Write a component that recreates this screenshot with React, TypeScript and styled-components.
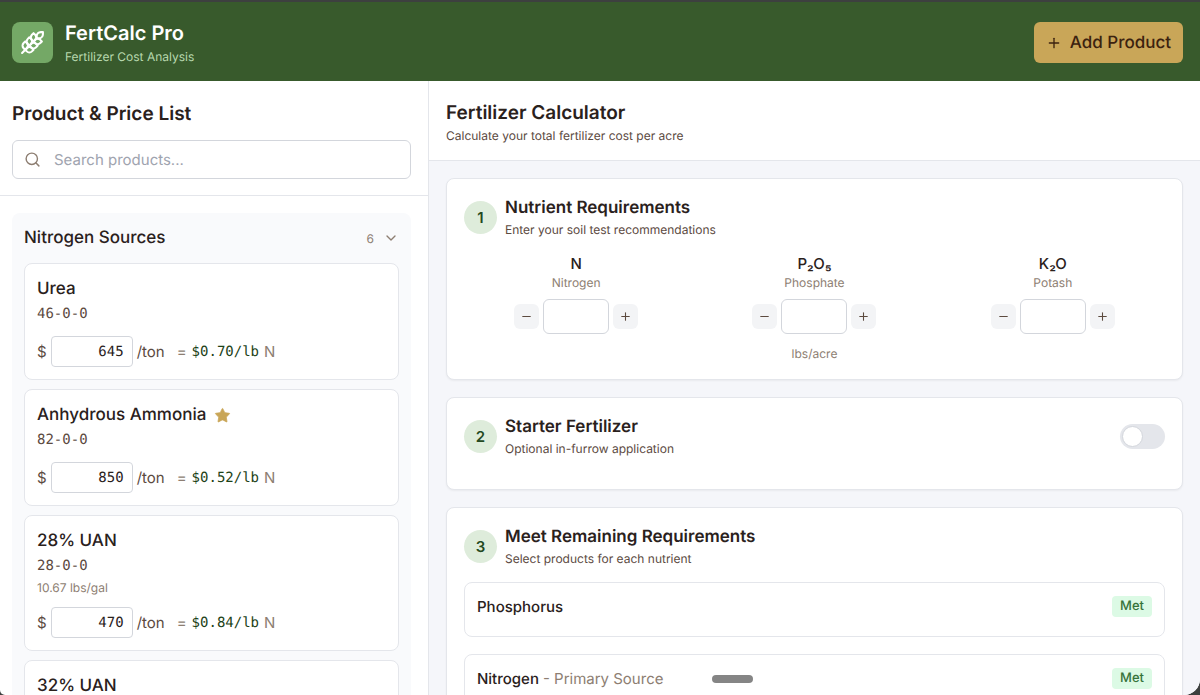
import React, { useState } from "react";
import styled, { createGlobalStyle } from "styled-components";
import { ChevronDown, Minus, Plus, Search, Star, Wheat } from "lucide-react";

const GlobalStyle = createGlobalStyle`
  *, *::before, *::after { box-sizing: border-box; }
  body {
    margin: 0;
    background: #3d403f;
    color: #2a211c;
    font-family: Inter, "Liberation Sans", sans-serif;
    text-rendering: geometricPrecision;
  }
  h1, h2, h3, h4, p { margin: 0; }
  button, input { font: inherit; color: inherit; text-rendering: inherit; }
`;

const MONO = `"DejaVu Sans Mono", "Liberation Mono", monospace`;

const Window = styled.div`
  display: flex;
  flex-direction: column;
  height: 100vh;
  border-top: 2px solid #3d403f;
  border-radius: 0 0 16px 5px;
  overflow: hidden;
  background: #ffffff;
`;

const TopBar = styled.header`
  display: flex;
  align-items: center;
  gap: 12px;
  padding: 17px 17px 15px 12px;
  background: #385a2c;
  color: #ffffff;
`;

const Logo = styled.div`
  display: grid;
  place-items: center;
  width: 41px;
  height: 41px;
  border-radius: 8px;
  background: #74a866;
`;

const Brand = styled.div`
  flex: 1;
`;

const BrandName = styled.h1`
  font-size: 20px;
  line-height: 29px;
  font-weight: 600;
`;

const Tagline = styled.p`
  font-size: 12px;
  line-height: 18px;
  color: #b7d8ae;
`;

const AddButton = styled.button`
  display: flex;
  align-items: center;
  gap: 8px;
  height: 41px;
  padding: 0 12px;
  border: 0;
  border-radius: 6px;
  background: #c9a658;
  color: #3b220f;
  font-size: 17px;
  font-weight: 500;
`;

const Columns = styled.div`
  display: flex;
  flex: 1;
  min-height: 0;
`;

const Sidebar = styled.aside`
  display: flex;
  flex-direction: column;
  flex: 0 0 429px;
  border-right: 1px solid #e4e6eb;
`;

const SidebarHead = styled.div`
  padding: 16px 17px 16px 12px;
  border-bottom: 1px solid #e4e6eb;
`;

const PanelTitle = styled.h2<{ $tall?: boolean }>`
  font-size: 19px;
  line-height: ${(p) => (p.$tall ? "33px" : "24px")};
  font-weight: 600;
`;

const SearchBox = styled.label`
  display: flex;
  align-items: center;
  gap: 13px;
  height: 39px;
  margin-top: 10px;
  padding: 0 11px;
  border: 1px solid #d3d6dc;
  border-radius: 6px;
  color: #8d7e72;
`;

const SearchInput = styled.input`
  flex: 1;
  min-width: 0;
  padding: 0;
  border: 0;
  outline: 0;
  background: transparent;
  color: #2a211c;
  font-size: 15px;
  &::placeholder { color: #9fa4af; opacity: 1; }
`;

const Scroll = styled.div`
  flex: 1;
  min-height: 0;
  overflow-y: auto;
  scrollbar-width: none;
`;

const ProductScroll = styled(Scroll)`
  padding: 17px 17px 17px 12px;
`;

const Group = styled.section`
  padding: 0 12px 12px;
  border-radius: 8px;
  background: #f9fafc;
`;

const GroupToggle = styled.button`
  display: flex;
  align-items: center;
  width: 100%;
  height: 50px;
  padding: 0;
  border: 0;
  background: transparent;
  text-align: left;
`;

const GroupName = styled.span`
  flex: 1;
  font-size: 17px;
  font-weight: 500;
`;

const GroupCount = styled.span`
  display: flex;
  align-items: center;
  gap: 9px;
  font-size: 12px;
  color: #8d7e72;
`;

const ProductList = styled.div`
  display: flex;
  flex-direction: column;
  gap: 9px;
`;

const ProductCard = styled.article`
  padding: 12px;
  border: 1px solid #e4e6eb;
  border-radius: 8px;
  background: #ffffff;
`;

const ProductName = styled.h3`
  display: flex;
  align-items: center;
  gap: 8px;
  font-size: 17px;
  line-height: 26px;
  font-weight: 500;
`;

const Analysis = styled.p`
  font-family: ${MONO};
  font-size: 14px;
  line-height: 25px;
  color: #5c4a3f;
`;

const Density = styled.p`
  margin-bottom: 11px;
  font-size: 12px;
  line-height: 17px;
  color: #8d7e72;
`;

const PriceRow = styled.div`
  display: flex;
  align-items: center;
  gap: 4px;
  font-size: 15px;
  color: #5c4a3f;
  ${Analysis} + & { margin-top: 9px; }
`;

const PriceInput = styled.input`
  width: 82px;
  height: 31px;
  padding: 0 8px;
  border: 1px solid #d3d6dc;
  border-radius: 4px;
  background: #ffffff;
  color: #2a211c;
  font-family: ${MONO};
  font-size: 14px;
  text-align: right;
`;

const UnitCost = styled.span`
  display: flex;
  align-items: center;
  gap: 5px;
  margin-left: 8px;
  color: #8d7e72;
`;

const CostValue = styled.strong`
  font-family: ${MONO};
  font-size: 14px;
  font-weight: 400;
  color: #1d4218;
`;

const Main = styled.main`
  display: flex;
  flex-direction: column;
  flex: 1;
  min-width: 0;
  background: #f5f6fa;
`;

const MainHead = styled.div`
  padding: 20px 17px 14px;
  border-bottom: 1px solid #e4e6eb;
  background: #ffffff;
`;

const Subtext = styled.p<{ $lead?: boolean }>`
  font-size: 12px;
  line-height: ${(p) => (p.$lead ? "21px" : "17px")};
  color: #5c4a3f;
`;

const StepScroll = styled(Scroll)`
  display: flex;
  flex-direction: column;
  gap: 17px;
  padding: 17px;
`;

const StepCard = styled.section`
  flex: none;
  padding: 17px;
  border: 1px solid #e4e6eb;
  border-radius: 8px;
  background: #ffffff;
  box-shadow: 0 1px 2px rgba(0, 0, 0, 0.05);
`;

const StepHead = styled.div`
  display: flex;
  align-items: center;
  gap: 8px;
  margin-bottom: 15px;
`;

const StepNumber = styled.span`
  display: grid;
  place-items: center;
  width: 33px;
  height: 33px;
  border-radius: 50%;
  background: #deecdb;
  color: #24491f;
  font-size: 15px;
  font-weight: 600;
`;

const StepText = styled.div`
  flex: 1;
`;

const StepTitle = styled.h3`
  font-size: 17px;
  line-height: 25px;
  font-weight: 600;
`;

const NutrientGrid = styled.div`
  display: grid;
  grid-template-columns: repeat(3, 1fr);
  gap: 14px;
`;

const Nutrient = styled.div`
  display: flex;
  flex-direction: column;
  align-items: center;
`;

const NutrientLabel = styled.label`
  font-size: 15px;
  line-height: 21px;
  font-weight: 500;
`;

const Muted = styled.p`
  font-size: 12px;
  line-height: 17px;
  color: #8d7e72;
  text-align: center;
`;

const RateUnit = styled(Muted)`
  margin-top: 12px;
  line-height: 16px;
`;

const Stepper = styled.div`
  display: flex;
  align-items: center;
  gap: 4px;
  margin-top: 8px;
`;

const StepButton = styled.button`
  display: grid;
  place-items: center;
  width: 25px;
  height: 25px;
  padding: 0;
  border: 0;
  border-radius: 6px;
  background: #f3f4f6;
  color: #5c4a3f;
`;

const RateInput = styled.input`
  width: 66px;
  height: 35px;
  padding: 0 8px;
  border: 1px solid #d3d6dc;
  border-radius: 6px;
  background: #ffffff;
  font-family: ${MONO};
  font-size: 14px;
  text-align: center;
`;

const Switch = styled.input`
  appearance: none;
  display: flex;
  align-items: center;
  width: 45px;
  height: 25px;
  margin: 0;
  padding: 0 2px;
  border-radius: 13px;
  background: #e4e6eb;
  &::before {
    content: "";
    width: 21px;
    height: 21px;
    border: 1px solid #d3d6dc;
    border-radius: 50%;
    background: #ffffff;
  }
  &:checked { justify-content: flex-end; background: #74a866; }
`;

const NeedList = styled.div`
  display: flex;
  flex-direction: column;
  gap: 17px;
`;

const NeedCard = styled.div`
  padding: 13px 12px 19px;
  border: 1px solid #e4e6eb;
  border-radius: 8px;
`;

const NeedHead = styled.div`
  display: flex;
  align-items: center;
  justify-content: space-between;
`;

const NeedName = styled.h4`
  font-size: 15px;
  line-height: 21px;
  font-weight: 500;
`;

const NeedNote = styled.span`
  font-weight: 400;
  color: #8d7e72;
`;

const Badge = styled.span`
  padding: 0 8px;
  border-radius: 4px;
  background: #dcfae5;
  color: #37733b;
  font-size: 13px;
  line-height: 21px;
  font-weight: 500;
`;

const DragHandle = styled.div`
  position: fixed;
  left: 61%;
  bottom: 12px;
  width: 41px;
  height: 8px;
  margin-left: -20px;
  border-radius: 4px;
  background: #858585;
`;

type Product = { name: string; analysis: string; price: string; cost: string; density?: string; favorite?: boolean };

const PRODUCTS: Product[] = [
  { name: "Urea", analysis: "46-0-0", price: "645", cost: "$0.70/lb" },
  { name: "Anhydrous Ammonia", analysis: "82-0-0", price: "850", cost: "$0.52/lb", favorite: true },
  { name: "28% UAN", analysis: "28-0-0", price: "470", cost: "$0.84/lb", density: "10.67 lbs/gal" },
  { name: "32% UAN", analysis: "", price: "", cost: "" },
];

const NUTRIENTS = [
  { id: "n", symbol: "N", name: "Nitrogen" },
  { id: "p", symbol: "P₂O₅", name: "Phosphate" },
  { id: "k", symbol: "K₂O", name: "Potash" },
];

const NEEDS = [
  { name: "Phosphorus", note: "" },
  { name: "Nitrogen", note: "- Primary Source" },
];

function PriceLine({ product }: { product: Product }) {
  const [price, setPrice] = useState(product.price);
  return (
    <PriceRow>
      <span>$</span>
      <PriceInput
        inputMode="decimal"
        aria-label={`${product.name} price per ton`}
        value={price}
        onChange={(e) => setPrice(e.target.value)}
      />
      <span>/ton</span>
      <UnitCost>
        <span>=</span>
        <CostValue>{product.cost}</CostValue>
        <span>N</span>
      </UnitCost>
    </PriceRow>
  );
}

function ProductItem({ product }: { product: Product }) {
  return (
    <ProductCard>
      <ProductName>
        {product.name}
        {product.favorite && <Star size={17} fill="#c9a658" color="#c9a658" strokeWidth={1} />}
      </ProductName>
      {product.analysis && <Analysis>{product.analysis}</Analysis>}
      {product.density && <Density>{product.density}</Density>}
      {product.price && <PriceLine product={product} />}
    </ProductCard>
  );
}

function NutrientField({ id, symbol, name }: { id: string; symbol: string; name: string }) {
  const [rate, setRate] = useState("");
  const change = (by: number) => setRate(String(Math.max(0, Number(rate) + by)));
  return (
    <Nutrient>
      <NutrientLabel htmlFor={id}>{symbol}</NutrientLabel>
      <Muted>{name}</Muted>
      <Stepper>
        <StepButton aria-label={`Decrease ${name}`} onClick={() => change(-5)}>
          <Minus size={13} strokeWidth={2} />
        </StepButton>
        <RateInput id={id} inputMode="numeric" value={rate} onChange={(e) => setRate(e.target.value)} />
        <StepButton aria-label={`Increase ${name}`} onClick={() => change(5)}>
          <Plus size={13} strokeWidth={2} />
        </StepButton>
      </Stepper>
    </Nutrient>
  );
}

function StepHeading({ step, title, text, children }: { step: number; title: string; text: string; children?: React.ReactNode }) {
  return (
    <StepHead>
      <StepNumber>{step}</StepNumber>
      <StepText>
        <StepTitle>{title}</StepTitle>
        <Subtext>{text}</Subtext>
      </StepText>
      {children}
    </StepHead>
  );
}

export default function App() {
  const [open, setOpen] = useState(true);
  return (
    <Window>
      <GlobalStyle />
      <TopBar>
        <Logo>
          <Wheat size={25} />
        </Logo>
        <Brand>
          <BrandName>FertCalc Pro</BrandName>
          <Tagline>Fertilizer Cost Analysis</Tagline>
        </Brand>
        <AddButton>
          <Plus size={16} strokeWidth={2} />
          Add Product
        </AddButton>
      </TopBar>
      <Columns>
        <Sidebar>
          <SidebarHead>
            <PanelTitle $tall>Product &amp; Price List</PanelTitle>
            <SearchBox>
              <Search size={17} strokeWidth={2} />
              <SearchInput type="search" aria-label="Search products" placeholder="Search products..." />
            </SearchBox>
          </SidebarHead>
          <ProductScroll>
            <Group>
              <GroupToggle aria-expanded={open} onClick={() => setOpen(!open)}>
                <GroupName>Nitrogen Sources</GroupName>
                <GroupCount>
                  6
                  <ChevronDown size={16} strokeWidth={2} />
                </GroupCount>
              </GroupToggle>
              {open && (
                <ProductList>
                  {PRODUCTS.map((p) => (
                    <ProductItem key={p.name} product={p} />
                  ))}
                </ProductList>
              )}
            </Group>
          </ProductScroll>
        </Sidebar>
        <Main>
          <MainHead>
            <PanelTitle>Fertilizer Calculator</PanelTitle>
            <Subtext $lead>Calculate your total fertilizer cost per acre</Subtext>
          </MainHead>
          <StepScroll>
            <StepCard>
              <StepHeading step={1} title="Nutrient Requirements" text="Enter your soil test recommendations" />
              <NutrientGrid>
                {NUTRIENTS.map((n) => (
                  <NutrientField key={n.id} {...n} />
                ))}
              </NutrientGrid>
              <RateUnit>lbs/acre</RateUnit>
            </StepCard>
            <StepCard>
              <StepHeading step={2} title="Starter Fertilizer" text="Optional in-furrow application">
                <Switch type="checkbox" role="switch" aria-label="Starter Fertilizer" />
              </StepHeading>
            </StepCard>
            <StepCard>
              <StepHeading step={3} title="Meet Remaining Requirements" text="Select products for each nutrient" />
              <NeedList>
                {NEEDS.map((n) => (
                  <NeedCard key={n.name}>
                    <NeedHead>
                      <NeedName>
                        {n.name} {n.note && <NeedNote>{n.note}</NeedNote>}
                      </NeedName>
                      <Badge>Met</Badge>
                    </NeedHead>
                  </NeedCard>
                ))}
              </NeedList>
            </StepCard>
          </StepScroll>
        </Main>
      </Columns>
      <DragHandle />
    </Window>
  );
}
